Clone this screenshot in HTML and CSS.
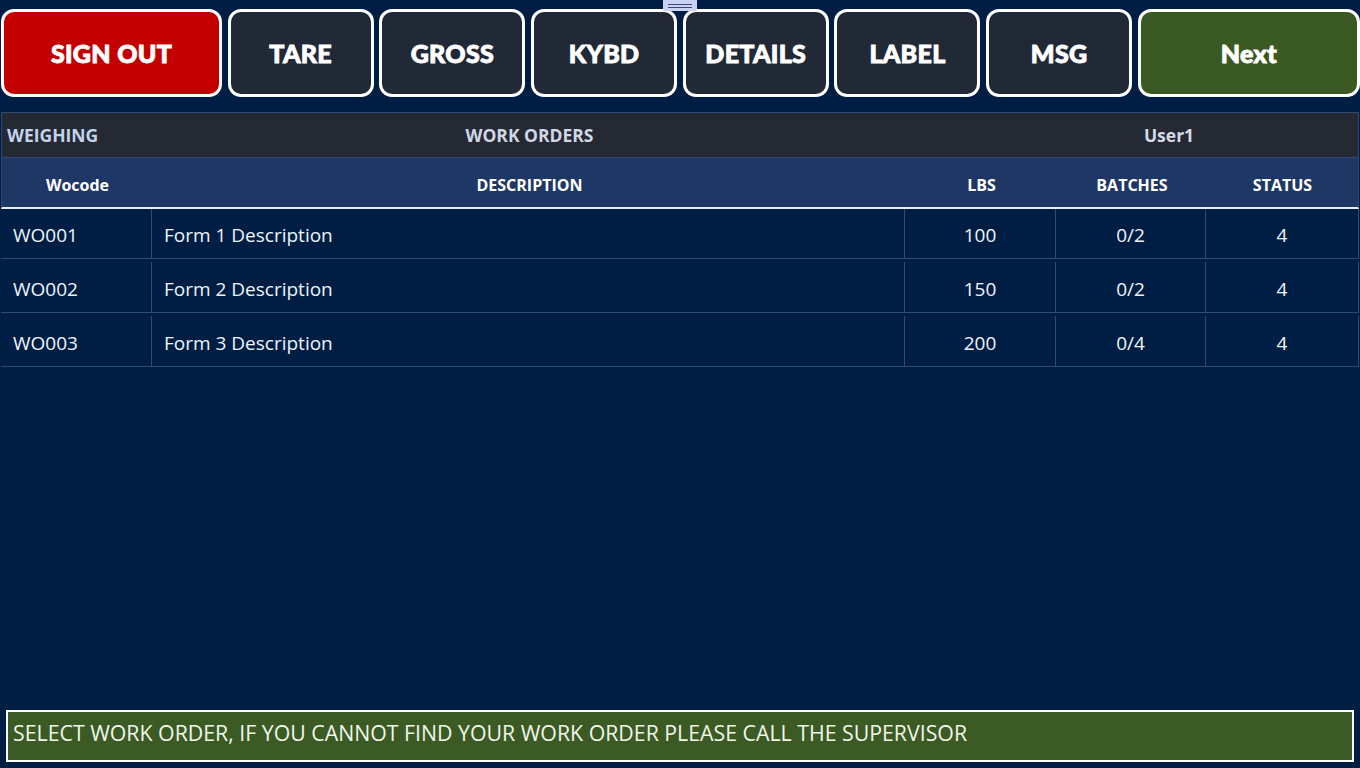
FILE: index.html
```html
<!DOCTYPE html>
<html lang="en">
<head>
<meta charset="utf-8">
<title>Work Orders</title>
<link rel="stylesheet" href="styles.css">
</head>
<body>
<div class="app">
  <div class="handle"><span></span><span></span></div>
  <nav class="toolbar">
    <button class="btn btn-red">SIGN OUT</button>
    <button class="btn">TARE</button>
    <button class="btn">GROSS</button>
    <button class="btn">KYBD</button>
    <button class="btn">DETAILS</button>
    <button class="btn">LABEL</button>
    <button class="btn">MSG</button>
    <button class="btn btn-green">Next</button>
  </nav>
  <section class="panel">
    <div class="titlebar">
      <div class="t-left">WEIGHING</div>
      <div class="t-center">WORK ORDERS</div>
      <div class="t-right">User1</div>
    </div>
    <div class="grid head">
      <div class="c">Wocode</div>
      <div class="c">DESCRIPTION</div>
      <div class="c">LBS</div>
      <div class="c">BATCHES</div>
      <div class="c">STATUS</div>
    </div>
    <div class="grid row first">
      <div class="c l">WO001</div>
      <div class="c l">Form 1 Description</div>
      <div class="c">100</div>
      <div class="c">0/2</div>
      <div class="c">4</div>
    </div>
    <div class="grid row">
      <div class="c l">WO002</div>
      <div class="c l">Form 2 Description</div>
      <div class="c">150</div>
      <div class="c">0/2</div>
      <div class="c">4</div>
    </div>
    <div class="grid row">
      <div class="c l">WO003</div>
      <div class="c l">Form 3 Description</div>
      <div class="c">200</div>
      <div class="c">0/4</div>
      <div class="c">4</div>
    </div>
  </section>
  <div class="spacer"></div>
  <footer class="status">SELECT WORK ORDER, IF YOU CANNOT FIND YOUR WORK ORDER PLEASE CALL THE SUPERVISOR</footer>
</div>
</body>
</html>
```

FILE: styles.css
```css
* { box-sizing: border-box; }
html, body {
  margin: 0;
  padding: 0;
  background: #001e43;
  height: 100%;
}
body {
  font-family: "Open Sans", "Noto Sans", sans-serif;
  color: #fff;
}
.app {
  height: 768px;
  display: flex;
  flex-direction: column;
  position: relative;
}
.handle {
  position: absolute;
  left: 663px;
  top: 0;
  width: 34px;
  height: 11px;
  background: #c9d2f2;
  border-radius: 0 0 2px 2px;
  display: flex;
  flex-direction: column;
  align-items: center;
  justify-content: center;
  gap: 2px;
  padding-top: 1px;
  z-index: 2;
}
.handle span {
  display: block;
  width: 24px;
  height: 1px;
  background: #3a4a7a;
}
.toolbar {
  display: grid;
  grid-template-columns: 221px repeat(6, 146px) 1fr;
  column-gap: 5.7px;
  padding: 9px 0 0 1px;
  height: 97px;
}
.btn {
  height: 88px;
  border: 3px solid #fff;
  border-radius: 13px;
  background: #222936;
  color: #fff;
  font-family: "Lato", "Inter", sans-serif;
  font-weight: 900;
  font-size: 25px;
  -webkit-text-stroke: 0.9px #fff;
  letter-spacing: 0.3px;
  padding: 0;
  margin: 0;
}
.btn-red { background: #c30000; }
.btn-green { background: #3b5a23; }
.panel {
  margin: 15px 1px 0 1px;
}
.titlebar {
  display: grid;
  grid-template-columns: 151px 753px 1fr;
  height: 46px;
  background: #242934;
  border: 1px solid #2a4a74;
  align-items: center;
  font-weight: 700;
  font-size: 17.5px;
  color: #c8d6e8;
}
.t-left {
  padding-left: 5px;
  color: #c3d4ea;
}
.t-center {
  text-align: center;
  color: #d0d8e4;
}
.t-right {
  text-align: center;
  padding-left: 74px;
  color: #d6dce6;
}
.grid {
  display: grid;
  grid-template-columns: 151px 753px 151px 150px 1fr;
}
.head {
  height: 51px;
  background: #1f3764;
  border-bottom: 2px solid #e8eef8;
  border-left: 1px solid #2a4a74;
  border-right: 1px solid #2a4a74;
  font-weight: 700;
  font-size: 16px;
  align-items: center;
  padding-top: 5px;
}
.head .c { text-align: center; }
.row {
  height: 54px;
  border-bottom: 1px solid #2b4b78;
  font-size: 19px;
  color: #eef4fb;
}
.row .c {
  display: flex;
  align-items: center;
  justify-content: center;
  border-right: 1px solid #2b4b78;
  margin-top: 3px;
  padding-top: 3px;
}
.row.first { height: 50px; }
.row.first .c { margin-top: 0; padding-top: 2px; }
.row .c.l {
  justify-content: flex-start;
  padding-left: 12px;
}
.spacer { flex: 1; }
.status {
  margin: 0 6px 6px 6px;
  height: 52px;
  border: 2px solid #fff;
  background: #3b5a24;
  font-size: 21.3px;
  color: #f0f6ea;
  display: flex;
  align-items: center;
  padding: 0 0 8px 5px;
}
```
